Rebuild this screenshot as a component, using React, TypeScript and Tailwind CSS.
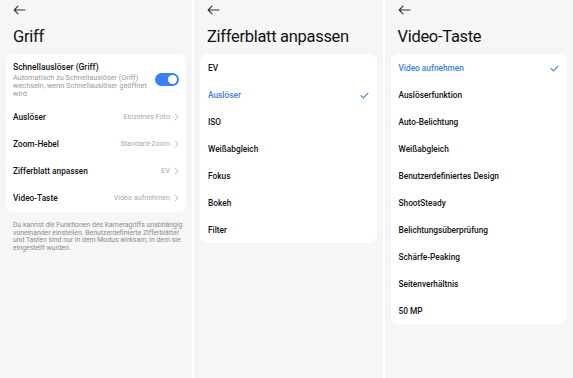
import React from 'react'

const Arrow = () => (
  <svg width="13" height="10" viewBox="0 0 13 10" fill="none" stroke="#333" strokeWidth="1.1" strokeLinecap="round" strokeLinejoin="round">
    <path d="M12 5H1.5M5 1.2L1.2 5L5 8.8" />
  </svg>
)

const Chevron = () => (
  <svg width="5" height="8" viewBox="0 0 5 8" fill="none" stroke="#b5b5b5" strokeWidth="0.9" strokeLinecap="round" strokeLinejoin="round">
    <path d="M1 1l3 3-3 3" />
  </svg>
)

const Check = () => (
  <svg width="9" height="7" viewBox="0 0 9 7" fill="none" stroke="#3482f6" strokeWidth="1.1" strokeLinecap="round" strokeLinejoin="round">
    <path d="M1 3.6l2.4 2.3L8 1.2" />
  </svg>
)

const Header = ({ title }: { title: string }) => (
  <div className='flex flex-col'>
    <div className='h-[20px] pl-[13px] pt-[5px]'>
      <Arrow />
    </div>
    <h1 className='h-[34px] pl-[13px] pt-[7px] text-[16.5px] tracking-[-0.3px] leading-[20px] text-[#111]'>{title}</h1>
  </div>
)

const SettingRow = ({ label, value }: { label: string; value: string }) => (
  <div className='flex items-center justify-between h-[27px] px-[7px]'>
    <span className='text-[8.3px] font-medium text-[#111]'>{label}</span>
    <span className='flex items-center gap-[4px] text-[7.2px] text-[#a8a8a8]'>
      {value}
      <Chevron />
    </span>
  </div>
)

const ListPanel = ({ title, items, selected }: { title: string; items: string[]; selected: string }) => (
  <div className='flex-1 bg-[#f6f6f6] flex flex-col'>
    <Header title={title} />
    <div className='mx-[6px] bg-white rounded-[8px] flex flex-col'>
      {items.map((item) => (
        <div key={item} className='flex items-center justify-between h-[27px] px-[8px] pt-[1px]'>
          <span className={'text-[8.3px] font-medium ' + (item === selected ? 'text-[#3482f6]' : 'text-[#111]')}>{item}</span>
          {item === selected && <Check />}
        </div>
      ))}
    </div>
  </div>
)

export default function App() {
  return (
    <div className='flex gap-[2px] w-[573px] h-[378px] bg-white' style={{ fontFamily: 'Roboto, "Noto Sans", sans-serif' }}>
      <div className='flex-1 bg-[#f6f6f6] flex flex-col'>
        <Header title='Griff' />
        <div className='mx-[6px] bg-white rounded-[8px] flex flex-col'>
          <div className='flex items-center justify-between h-[50px] px-[7px] pt-[1px]'>
            <div className='flex flex-col w-[142px]'>
              <span className='text-[8.5px] font-medium text-[#111] leading-[11px]'>Schnellauslöser (Griff)</span>
              <span className='text-[7.3px] text-[#9a9a9a] leading-[8px] mt-[1px]'>
                Automatisch zu Schnellauslöser (Griff) wechseln, wenn Schnellauslöser geöffnet wird
              </span>
            </div>
            <div className='w-[24px] h-[13px] rounded-full bg-[#3482f6] flex items-center justify-end pr-[2px]'>
              <div className='w-[9px] h-[9px] rounded-full bg-white' />
            </div>
          </div>
          <SettingRow label='Auslöser' value='Einzelnes Foto' />
          <SettingRow label='Zoom-Hebel' value='Standard-Zoom' />
          <SettingRow label='Zifferblatt anpassen' value='EV' />
          <SettingRow label='Video-Taste' value='Video aufnehmen' />
        </div>
        <p className='pl-[13px] pr-[5px] pt-[10px] text-[6.9px] leading-[7.6px] text-[#8c8c8c]'>
          Du kannst die Funktionen des Kameragriffs unabhängig voneinander einstellen. Benutzerdefinierte Zifferblätter und Tasten sind nur in dem Modus wirksam, in dem sie eingestellt wurden.
        </p>
      </div>
      <ListPanel
        title='Zifferblatt anpassen'
        items={['EV', 'Auslöser', 'ISO', 'Weißabgleich', 'Fokus', 'Bokeh', 'Filter']}
        selected='Auslöser'
      />
      <ListPanel
        title='Video-Taste'
        items={['Video aufnehmen', 'Auslöserfunktion', 'Auto-Belichtung', 'Weißabgleich', 'Benutzerdefiniertes Design', 'ShootSteady', 'Belichtungsüberprüfung', 'Schärfe-Peaking', 'Seitenverhältnis', '50 MP']}
        selected='Video aufnehmen'
      />
    </div>
  )
}
